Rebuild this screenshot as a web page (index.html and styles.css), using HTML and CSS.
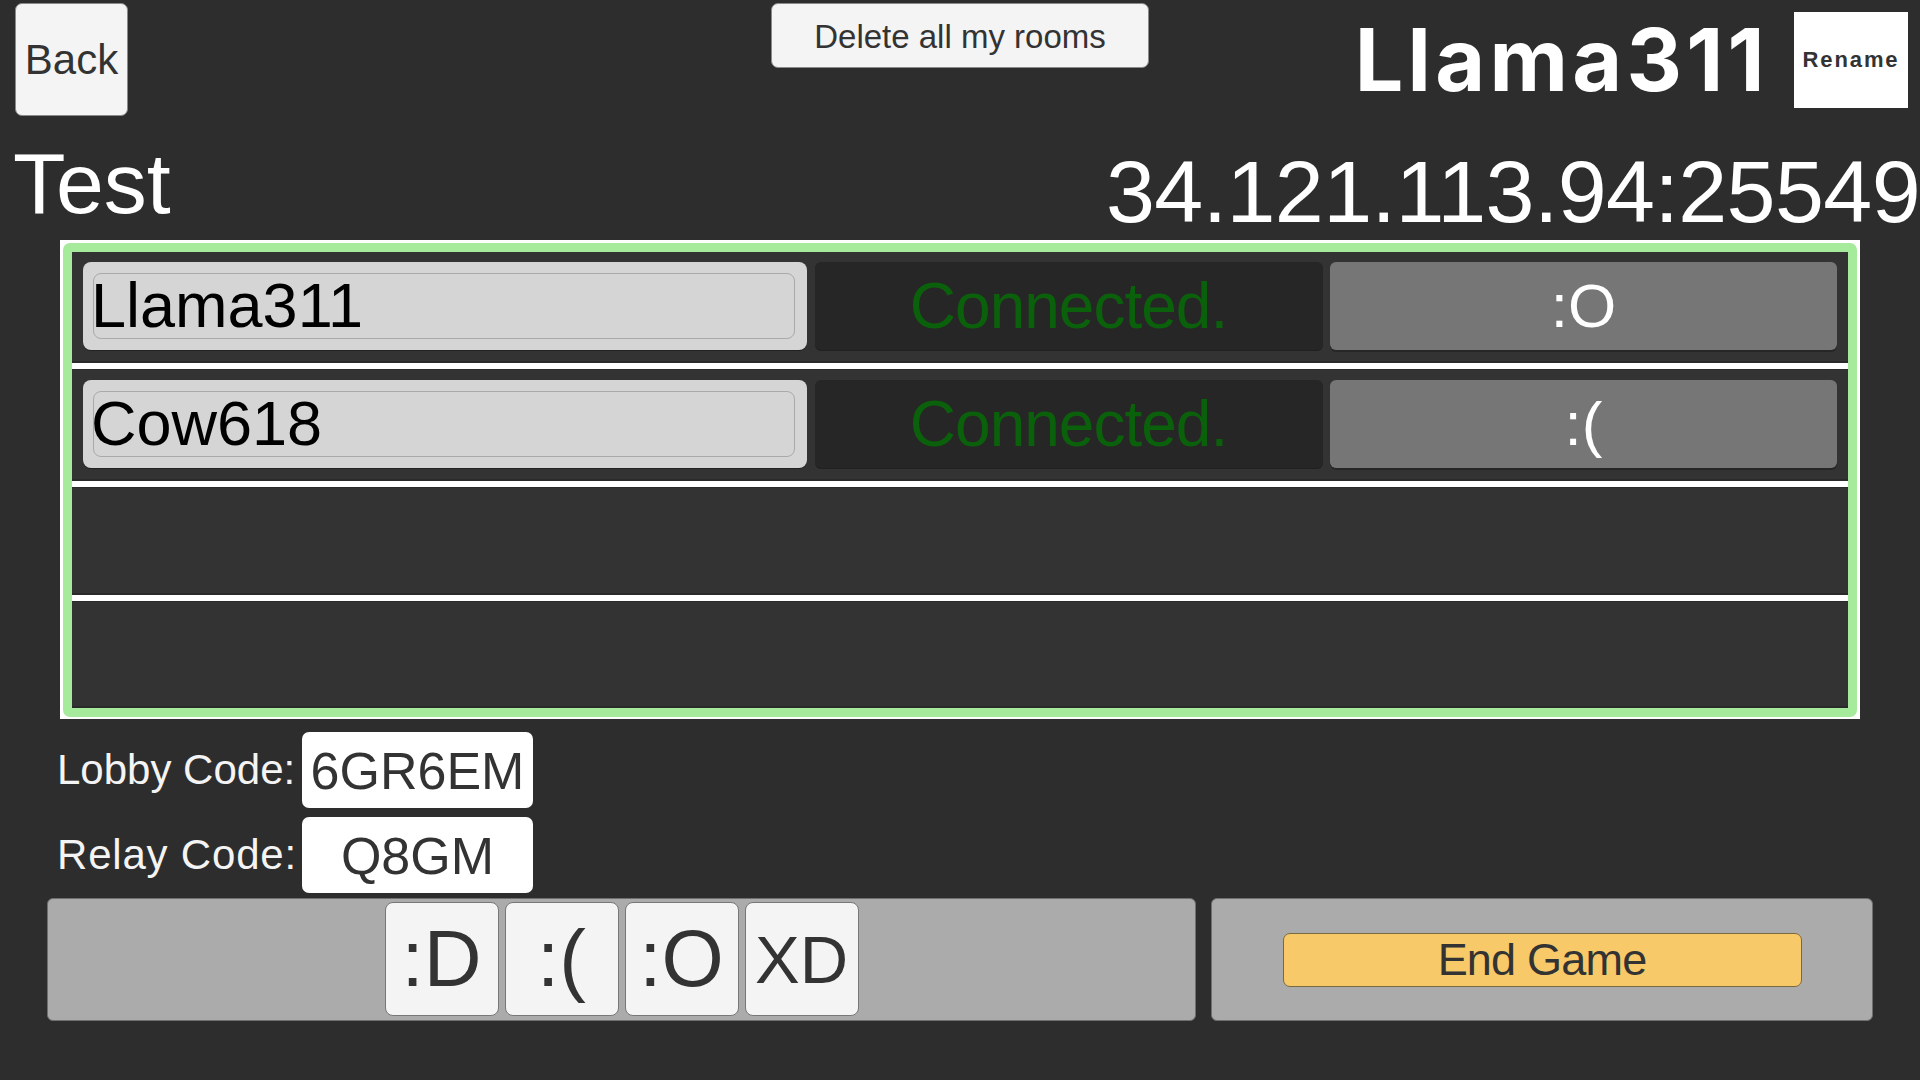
FILE: index.html
```html
<!DOCTYPE html>
<html lang="en">
<head>
<meta charset="utf-8">
<title>Lobby</title>
<link rel="stylesheet" href="styles.css">
</head>
<body>
<div class="screen">
  <header class="top">
    <div class="top-left"><button class="btn back">Back</button></div>
    <div class="top-center"><button class="btn delete">Delete all my rooms</button></div>
    <div class="top-right">
      <span class="player">Llama311</span>
      <button class="rename">Rename</button>
    </div>
  </header>

  <div class="titles">
    <h1 class="room">Test</h1>
    <div class="address">34.121.113.94:25549</div>
  </div>

  <div class="frame">
    <div class="panel">
      <div class="list">
        <div class="row">
          <div class="name"><div class="field">Llama311</div></div>
          <div class="status">Connected.</div>
          <div class="emote">:O</div>
        </div>
        <div class="sep"></div>
        <div class="row">
          <div class="name"><div class="field">Cow618</div></div>
          <div class="status">Connected.</div>
          <div class="emote">:(</div>
        </div>
        <div class="sep"></div>
        <div class="row"></div>
        <div class="sep"></div>
        <div class="row"></div>
      </div>
    </div>
  </div>

  <div class="codes">
    <span class="code-label">Lobby Code:</span>
    <span class="code-box">6GR6EM</span>
    <span class="code-label relay">Relay Code:</span>
    <span class="code-box">Q8GM</span>
  </div>

  <div class="bottom">
    <div class="bar emotes">
      <button class="emote-btn">:D</button>
      <button class="emote-btn">:(</button>
      <button class="emote-btn">:O</button>
      <button class="emote-btn small">XD</button>
    </div>
    <div class="bar actions">
      <button class="end">End Game</button>
    </div>
  </div>
</div>
</body>
</html>
```

FILE: styles.css
```css
* { box-sizing: border-box; }

html, body {
  margin: 0;
  padding: 0;
  background: #2d2d2d;
}

body {
  width: 1920px;
  height: 1080px;
  overflow: hidden;
  font-family: "Liberation Sans", Arial, sans-serif;
  color: #333;
}

button {
  font-family: "Liberation Sans", Arial, sans-serif;
  margin: 0;
  padding: 0;
  cursor: pointer;
}

.screen {
  display: flex;
  flex-direction: column;
  height: 1080px;
}

/* ---------- top bar ---------- */
.top {
  display: grid;
  grid-template-columns: 1fr auto 1fr;
  height: 116px;
  padding-top: 3px;
  align-items: start;
}

.top-left { padding-left: 15px; }

.btn {
  background: #f4f4f4;
  border: 1px solid #8a8a8a;
  border-radius: 7px;
  color: #333;
}

.back {
  width: 113px;
  height: 113px;
  font-size: 42px;
  line-height: 1;
}

.delete {
  width: 378px;
  height: 65px;
  font-size: 33px;
  padding-top: 2px;
}

.top-right {
  display: flex;
  justify-content: flex-end;
  align-items: center;
  gap: 25px;
  padding-right: 12px;
  margin-top: 9px;
}

.player {
  font-family: Inter, "Liberation Sans", sans-serif;
  font-weight: 700;
  font-size: 86px;
  line-height: 1;
  letter-spacing: 4.3px;
  color: #fff;
}

.rename {
  width: 114px;
  height: 96px;
  background: #fff;
  border: none;
  border-radius: 0;
  font-weight: 700;
  font-size: 22px;
  letter-spacing: 1.9px;
  color: #333;
}

/* ---------- title row ---------- */
.titles {
  display: flex;
  justify-content: space-between;
  align-items: flex-start;
  height: 124px;
  padding-left: 13px;
}

.room {
  margin: 24px 0 0;
  font-size: 86px;
  font-weight: 400;
  line-height: 1;
  color: #fff;
}

.address {
  margin-top: 32px;
  font-size: 88px;
  line-height: 1;
  letter-spacing: -0.6px;
  color: #fff;
}

/* ---------- players panel ---------- */
.frame {
  margin: 0 60px;
  height: 479px;
  background: #fff;
  padding: 3px 3px 2px 3px;
}

.panel {
  height: 100%;
  background: #a6ea9b;
  border-radius: 7px;
  padding: 9px;
}

.list {
  height: 100%;
  background: #333;
  display: flex;
  flex-direction: column;
}

.row {
  flex: 1;
  display: grid;
  grid-template-columns: 724px 508px 1fr;
  column-gap: 7.5px;
  padding: 10px 11px 11px;
  border-bottom: 2px solid #2a2a2a;
}

.sep {
  flex: none;
  height: 7px;
  background: #fff;
  border-bottom: 1px solid #2a2a2a;
}

.name {
  background: #d5d5d5;
  border-radius: 8px;
  padding: 11px 12px 11px 10px;
  box-shadow: 0 1px 0 #222;
}

.field {
  height: 100%;
  border: 1.5px solid #a9a9a9;
  border-radius: 8px;
  text-indent: -3px;
  font-size: 63px;
  line-height: 62px;
  color: #000;
  white-space: nowrap;
}

.status {
  background: #262626;
  border-radius: 6px;
  text-align: center;
  font-size: 64px;
  line-height: 88px;
  letter-spacing: -1px;
  color: #0b600b;
  box-shadow: 0 1px 0 #202020;
}

.emote {
  background: #767676;
  border-radius: 6px;
  text-align: center;
  font-size: 62px;
  line-height: 88px;
  color: #fff;
  box-shadow: 0 2px 0 #262626;
}

/* ---------- codes ---------- */
.codes {
  display: grid;
  grid-template-columns: 245px 231px;
  grid-auto-rows: 76px;
  row-gap: 9px;
  align-items: center;
  margin-top: 13px;
  padding-left: 57px;
}

.code-label {
  font-size: 42px;
  color: #f4f4f4;
  white-space: nowrap;
}

.code-label.relay {
  letter-spacing: 0.8px;
}

.code-box {
  height: 76px;
  background: #fff;
  border-radius: 7px;
  text-align: center;
  font-size: 52px;
  line-height: 78px;
  color: #333;
}

/* ---------- bottom bars ---------- */
.bottom {
  display: grid;
  grid-template-columns: 1149px 1fr;
  gap: 15px;
  height: 123px;
  margin-top: 5px;
  padding: 0 47px;
}

.bar {
  background: #ababab;
  border: 1px solid #6f6f6f;
  border-radius: 6px;
  display: flex;
  justify-content: center;
  align-items: center;
}

.emotes {
  gap: 6px;
  align-items: flex-start;
  padding-top: 3px;
}

.emote-btn {
  width: 114px;
  height: 114px;
  background: #f4f4f4;
  border: 1.5px solid #777;
  border-radius: 8px;
  font-size: 80px;
  line-height: 1;
  color: #333;
}

.emote-btn.small {
  font-size: 67px;
}

.end {
  width: 519px;
  height: 54px;
  background: #f7c968;
  border: 1px solid #7a6a40;
  border-radius: 7px;
  font-size: 45px;
  letter-spacing: -0.8px;
  color: #333;
}
```
